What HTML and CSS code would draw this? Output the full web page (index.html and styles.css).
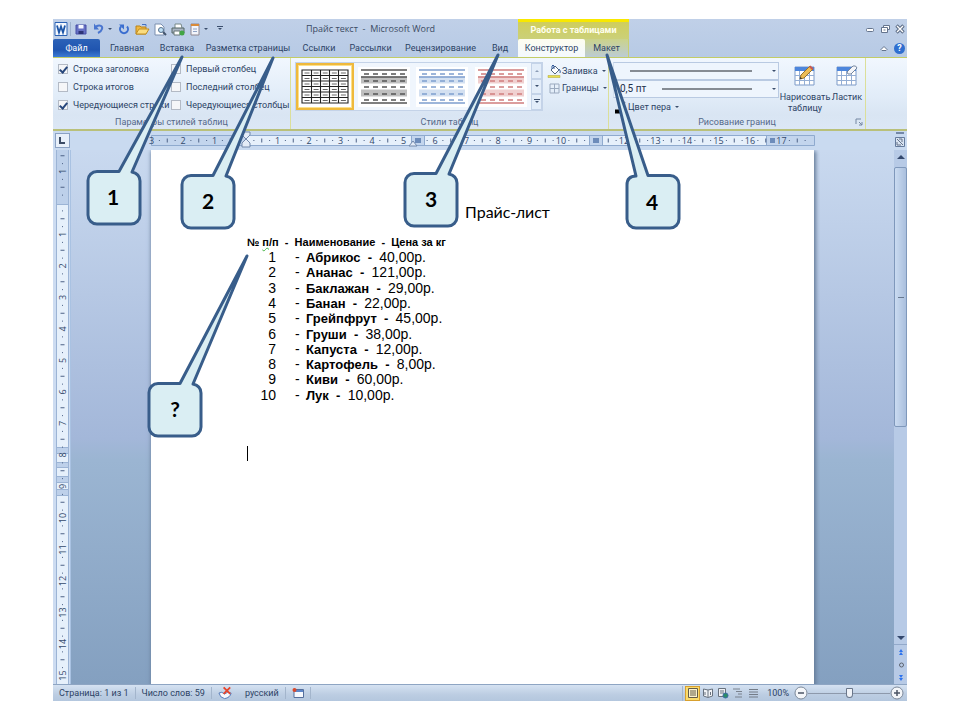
FILE: index.html
```html
<!DOCTYPE html>
<html lang="ru">
<head>
<meta charset="utf-8">
<title>Прайс текст - Microsoft Word</title>
<link rel="stylesheet" href="styles.css">
</head>
<body>
<main class="window">
  <header class="top">
    <div class="titlebar">
      <div class="quick">
        <svg class="ic w18" viewBox="0 0 18 16"><path d="M2 1.500h12v13h-12z" fill="#f4f8fe" stroke="#2b62b5"/><path d="M4 4.500l2 7 2-6 2 6 2-7" fill="none" stroke="#1c55a8" stroke-width="1.800"/><path d="M17.500 1v14" stroke="#9db1cd"/></svg>
        <button class="ic w20" aria-label="Сохранить"><svg viewBox="0 0 20 16"><path d="M5 4h10v9H5z" fill="#6670c4" stroke="#464fa6"/><path d="M7.500 4h5v3.500h-5z" fill="#f5f7ff"/><path d="M7.500 10h5v3h-5z" fill="#2d3478"/></svg></button>
        <button class="ic w16" aria-label="Отменить"><svg viewBox="0 0 16 16"><path d="M5 5.500c4-2 7-.5 6 2.500-.5 2-2 3-4 4" fill="none" stroke="#4a76cf" stroke-width="2"/><path d="M3 2.500v6h5z" fill="#4a76cf"/></svg></button>
        <span class="caret"></span>
        <button class="ic w18" aria-label="Повторить"><svg viewBox="0 0 18 16"><path d="M6 5.500a4 4 0 1 0 6 0" fill="none" stroke="#3a6ed0" stroke-width="2"/><path d="M4 3.500h5v5z" fill="#3a6ed0"/></svg></button>
        <button class="ic w18" aria-label="Открыть"><svg viewBox="0 0 18 16"><path d="M3 13V5h4l1 1h5v7z" fill="#f0b840" stroke="#b98218"/><path d="M3 13l3-5h10l-3 5z" fill="#fbdc7e" stroke="#c08e22"/><path d="M9 3.500h4v2" fill="none" stroke="#4472c4"/></svg></button>
        <button class="ic w18" aria-label="Просмотр"><svg viewBox="0 0 18 16"><path d="M4 3h6l3 3v8H4z" fill="#fff" stroke="#7b8fae"/><circle cx="10" cy="9" r="2.500" fill="#bfe0f5" stroke="#55718f"/><path d="M12 11l3 3" stroke="#44566e" stroke-width="2"/></svg></button>
        <button class="ic w18" aria-label="Печать"><svg viewBox="0 0 18 16"><path d="M6 7V3h6l1 4" fill="#fff" stroke="#788"/><path d="M3 7h12v5H3z" fill="#a9b4c2" stroke="#566"/><path d="M5 10h6v4H5z" fill="#fff" stroke="#677"/><circle cx="13" cy="12" r="2.500" fill="#42a544"/></svg></button>
        <button class="ic w16" aria-label="Вставить"><svg viewBox="0 0 16 16"><path d="M4 3h8v11H4z" fill="#f3f5fb" stroke="#8f8790"/><path d="M4 3h8v2H4z" fill="#d98a38"/><path d="M6 8h4M6 10.500h4" stroke="#8fa3c5"/></svg></button>
        <span class="caret"></span><span class="bar"></span><span class="caret lined"></span>
      </div>
      <h1>Прайс текст&nbsp; -&nbsp; Microsoft Word</h1>
    </div>
    <div class="context-title">Работа с таблицами</div>
    <div class="controls">
      <button aria-label="Свернуть"><svg viewBox="0 0 10 10"><rect x="1.500" y="4.500" width="7" height="3" rx="1" fill="#fff" stroke="#64748d"/></svg></button>
      <button aria-label="Восстановить"><svg viewBox="0 0 10 10"><path d="M3.500 3.500v-2h6v4h-2" fill="#fff" stroke="#64748d"/><path d="M1.500 3.500h6v5h-6zM3.500 6h2" fill="#fff" stroke="#64748d"/></svg></button>
      <button aria-label="Закрыть"><svg viewBox="0 0 10 10"><path d="M1.500 1.500l7 7M8.500 1.500l-7 7" stroke="#5c6c86" stroke-width="3.400"/><path d="M2 2l6 6M8 2l-6 6" stroke="#fff" stroke-width="1.400"/></svg></button>
    </div>
    <nav class="tabs">
      <button class="file">Файл</button><button>Главная</button><button>Вставка</button><button>Разметка страницы</button><button>Ссылки</button><button>Рассылки</button><button>Рецензирование</button><button>Вид</button>
    </nav>
    <nav class="context-tabs"><button class="active">Конструктор</button><button>Макет</button></nav>
    <div class="controls help">
      <button aria-label="Свернуть ленту"><svg viewBox="0 0 10 10"><path d="M2 6.500l3-3 3 3-1 1H3z" fill="#fff" stroke="#64748d"/></svg></button>
      <button class="q" aria-label="Справка">?</button>
    </div>
  </header>

  <section class="ribbon">
    <fieldset class="group g-options">
      <div class="checks">
        <label><input type="checkbox" checked>Строка заголовка</label>
        <label><input type="checkbox">Первый столбец</label>
        <label><input type="checkbox">Строка итогов</label>
        <label><input type="checkbox">Последний столбец</label>
        <label><input type="checkbox" checked>Чередующиеся строки</label>
        <label><input type="checkbox">Чередующиеся столбцы</label>
      </div>
      <div class="caption">Параметры стилей таблиц</div>
    </fieldset>
    <div class="group g-styles">
      <div class="content">
        <div class="gallery">
          <button class="thumb selected" aria-label="Сетка таблицы"><svg viewBox="0 0 52 40"><path d="M3 3h46v33H3zM3 8.500h46M3 14h46M3 19.500h46M3 25h46M3 30.500h46M12.500 3v33M21.500 3v33M30.500 3v33M39.500 3v33" fill="none" stroke="#222" stroke-width="1.100"/><path d="M5.500 6h42M5.500 11.500h42M5.500 17h42M5.500 22.500h42M5.500 28h42M5.500 33.500h42" stroke="#666" stroke-dasharray="5 4.100"/></svg></button>
          <button class="thumb gray" aria-label="Светлая заливка"><svg viewBox="0 0 52 40"><use href="#style"/></svg></button>
          <button class="thumb blue" aria-label="Светлая заливка, акцент 1"><svg viewBox="0 0 52 40"><use href="#style"/></svg></button>
          <button class="thumb red" aria-label="Светлая заливка, акцент 2"><svg viewBox="0 0 52 40"><use href="#style"/></svg></button>
          <div class="scroller"><button aria-label="Вверх"><i class="caret up"></i></button><button aria-label="Вниз"><i class="caret"></i></button><button aria-label="Ещё"><i class="caret lined"></i></button></div>
        </div>
        <div class="fills">
          <button><svg viewBox="0 0 14 14"><path d="M4 6l4-4 4 4-4 4z" fill="#fff" stroke="#51647f"/><path d="M5 5V2q1-2 2 0v3M12 5q2 2 1 4" fill="none" stroke="#335b9b"/><path d="M1 11.500h12v2H1z" fill="#e9df4c" stroke="#aca435" stroke-width=".5"/></svg>Заливка<i class="caret"></i></button>
          <button><svg viewBox="0 0 14 14"><path d="M3 3h9v9H3zM3 7.500h9M7.500 3v9" fill="none" stroke="#9baabf"/></svg>Границы<i class="caret"></i></button>
        </div>
      </div>
      <div class="caption">Стили таблиц</div>
    </div>
    <div class="group g-draw">
      <div class="content">
        <div class="pens">
          <div class="combo"><select aria-label="Стиль пера"><option></option></select><span class="line"></span><i class="caret"></i></div>
          <div class="combo"><select aria-label="Толщина пера"><option>0,5 пт</option></select><span class="line"></span><i class="caret"></i></div>
          <button class="pen"><svg viewBox="0 0 14 14"><path d="M6 8l6-6" stroke="#7b8aa5" stroke-width="2"/><path d="M2 9.500h5v4H2z" fill="#000"/></svg>Цвет пера<i class="caret"></i></button>
        </div>
        <button class="big"><svg viewBox="0 0 24 22"><use href="#table"/><path d="M7 14l1-4 9-9 3 3-9 9z" fill="#edbd55" stroke="#96722d"/><path d="M16 2l1.500-1.500 3 3L19 5z" fill="#c95a50"/><path d="M7 14l.5-2 1.500 1.500z" fill="#222"/></svg>Нарисовать таблицу</button>
        <button class="big"><svg viewBox="0 0 24 22"><use href="#table"/><path d="M12 7l6-6q3-1 4 2l-6 6q-4 1-4-2z" fill="#f4f6fa" stroke="#74869f"/></svg>Ластик</button>
      </div>
      <div class="caption">Рисование границ<svg class="launch" viewBox="0 0 8 8"><path d="M1 6V1h5M4 4l3 3M7 4v3H4" fill="none" stroke="#7587a2"/></svg></div>
    </div>
  </section>

  <section class="ruler-row">
    <button class="corner" aria-label="Табуляция"><svg viewBox="0 0 13 13"><path d="M4 3v6h5" fill="none" stroke="#3c4c66" stroke-width="2"/></svg></button>
    <div class="ruler-area">
      <svg class="h-ruler" id="hruler" viewBox="0 0 664 18">
        <rect x="0" y="4" width="664" height="11" fill="#c3d5ed"/>
        <path d="M95 4h165v11H95zM273 4h165v11H273zM451 4h164v11H451z" fill="#e6f0fb"/>
        <path d="M.5 4.500h663v10H.5z" fill="none" stroke="#8faace"/>
        <path d="M260.500 4v11M273.500 4v11M438.500 4v11M451.500 4v11M615.500 4v11" stroke="#8faace"/>
        <path d="M264 7h6v5h-6zM442 7h6v5h-6zM619 7h5v5h-5z" fill="#6d8cba"/>
      </svg>
    </div>
    <button class="view-ruler" aria-label="Линейка"><svg viewBox="0 0 12 18"><path d="M2 1h8" stroke="#566b8f" stroke-width="1.500"/><path d="M1.500 5.500h9v9h-9z" fill="#d9e4f2" stroke="#657b9c"/><path d="M3 7l6 6M5 7h3v3M3 10v3h4" fill="none" stroke="#65738a"/></svg></button>
  </section>

  <section class="workspace">
    <div class="v-side">
      <svg class="v-ruler" id="vruler" viewBox="0 0 18 534">
        <rect x="4" width="11" height="534" fill="#e6f0fb"/>
        <path d="M4 0h11v54H4zM4 297h11v6H4zM4 312h11v5H4zM4 326h11v6H4zM4 339h11v6H4z" fill="#bdd0ea"/>
        <path d="M3.500 0v534M15.500 0v534M4 54.500h11M4 297.500h11M4 303.500h11M4 312.500h11M4 317.500h11M4 326.500h11M4 332.500h11M4 339.500h11M4 345.500h11" stroke="#9cb4d5"/>
      </svg>
    </div>
    <div class="canvas">
      <article class="page">
        <h2>Прайс-лист</h2>
        <div class="price">
          <p class="heads">№ <u>п</u>/п&nbsp; -&nbsp; Наименование&nbsp; -&nbsp; Цена за кг</p>
          <div class="rows">
            <p><span>1</span><span>-</span><b>Абрикос &nbsp;-&nbsp; </b>40,00р.</p>
            <p><span>2</span><span>-</span><b>Ананас &nbsp;-&nbsp; </b>121,00р.</p>
            <p><span>3</span><span>-</span><b>Баклажан&nbsp; -&nbsp; </b>29,00р.</p>
            <p><span>4</span><span>-</span><b>Банан&nbsp; -&nbsp; </b>22,00р.</p>
            <p><span>5</span><span>-</span><b>Грейпфрут &nbsp;-&nbsp; </b>45,00р.</p>
            <p><span>6</span><span>-</span><b>Груши&nbsp; -&nbsp; </b>38,00р.</p>
            <p><span>7</span><span>-</span><b>Капуста &nbsp;-&nbsp; </b>12,00р.</p>
            <p><span>8</span><span>-</span><b>Картофель &nbsp;-&nbsp; </b>8,00р.</p>
            <p><span>9</span><span>-</span><b>Киви&nbsp; -&nbsp; </b>60,00р.</p>
            <p><span>10</span><span>-</span><b>Лук&nbsp; -&nbsp; </b>10,00р.</p>
          </div>
          <div class="cursor"></div>
        </div>
      </article>
    </div>
    <div class="scrollbar">
      <button aria-label="Прокрутить вверх"><i class="caret up big-caret"></i></button>
      <div class="track"><div class="handle"></div></div>
      <button class="down" aria-label="Прокрутить вниз"><i class="caret big-caret"></i></button>
      <button aria-label="Предыдущая страница"><svg viewBox="0 0 8 8"><path d="M2 4l2-3 2 3zM2 7l2-3 2 3z" fill="#2d73ee"/></svg></button>
      <button aria-label="Выбор объекта"><svg viewBox="0 0 8 8"><circle cx="4.500" cy="4" r="2" fill="none" stroke="#5d6470"/></svg></button>
      <button aria-label="Следующая страница"><svg viewBox="0 0 8 8"><path d="M2 1l2 3 2-3zM2 4l2 3 2-3z" fill="#2d73ee"/></svg></button>
    </div>
  </section>

  <footer class="status">
    <span>Страница: 1 из 1</span>
    <span>Число слов: 59</span>
    <span class="proof"><svg class="s16" viewBox="0 0 16 14"><path d="M1 7q3-2 6 1 3-3 7-1-1 5-7 6-5-1-6-6z" fill="#f6f8fc" stroke="#4e74b5"/><path d="M6 1l7 7M13 1L6 8" stroke="#e8452c" stroke-width="2"/></svg></span>
    <span>русский</span>
    <span><svg class="s12" viewBox="0 0 12 12"><path d="M2 2.500h9.500v8H2z" fill="#f6f9fe" stroke="#556f9c"/><path d="M3 4h8" stroke="#5d86c8" stroke-width="2"/><circle cx="2.500" cy="3" r="2" fill="#d9482b"/></svg></span>
    <div class="views">
      <button class="on" aria-label="Разметка страницы"><svg viewBox="0 0 12 12"><path d="M1.500 1.500h9v9h-9zM3 4h6M3 6h6M3 8h6" fill="#fbf3cf" stroke="#645c48"/></svg></button>
      <button aria-label="Режим чтения"><svg viewBox="0 0 12 12"><path d="M1.500 2l4.500 1 4.500-1v7L6 10.500 1.500 9zM6 3v7M3 5v3M8.500 5v3" fill="#f1f3f6" stroke="#68727f"/></svg></button>
      <button aria-label="Веб-документ"><svg viewBox="0 0 12 12"><path d="M1.500 1.500h7v8h-7zM3 4h4M3 6h4" fill="#eef0f4" stroke="#68727f"/><circle cx="8.500" cy="8.500" r="2.500" fill="#2c8d68" stroke="#3d69a5"/></svg></button>
      <button aria-label="Структура"><svg viewBox="0 0 12 12"><path d="M1 2h7M4 4.500h6M6 7h4M3 10h7" stroke="#7a828e"/></svg></button>
      <button aria-label="Черновик"><svg viewBox="0 0 12 12"><path d="M2 2.500h9M2 5h9M2 7.500h9M2 10h9" stroke="#747c88"/></svg></button>
    </div>
    <label class="percent" for="zoom">100%</label>
    <button class="round" aria-label="Уменьшить"><svg viewBox="0 0 14 14"><circle cx="7" cy="7" r="6" fill="#f4f6f9" stroke="#7d899a"/><path d="M4 7h6" stroke="#4c5565" stroke-width="1.500"/></svg></button>
    <input type="range" id="zoom" min="0" max="100" value="50">
    <button class="round" aria-label="Увеличить"><svg viewBox="0 0 14 14"><circle cx="7" cy="7" r="6" fill="#f4f6f9" stroke="#7d899a"/><path d="M4 7h6M7 4v6" stroke="#4c5565" stroke-width="1.500"/></svg></button>
  </footer>

  <svg class="callouts" viewBox="53 19 854 681">
    <path d="M119 171.500H97a9 9 0 0 0-9 9V215a9 9 0 0 0 9 9h34a9 9 0 0 0 9-9v-34q0-7-8-9L182 57z"/>
    <path d="M213 175.500H191a9 9 0 0 0-9 9V219a9 9 0 0 0 9 9h34a9 9 0 0 0 9-9v-34q0-7-8-9L273 58z"/>
    <path d="M436 173.500H414a9 9 0 0 0-9 9V217a9 9 0 0 0 9 9h34a9 9 0 0 0 9-9v-34q0-7-8-9L498 55z"/>
    <path d="M648 175.500H670a9 9 0 0 1 9 9V219a9 9 0 0 1-9 9h-34a9 9 0 0 1-9-9v-34q0-9 9-9L607 55z"/>
    <path d="M180 383.500H158a9 9 0 0 0-9 9V427a9 9 0 0 0 9 9h34a9 9 0 0 0 9-9v-34q0-7-8-9L247 256z"/>
    <text x="113" y="205">1</text><text x="208" y="209">2</text><text x="431" y="207">3</text><text x="652" y="210">4</text><text x="175" y="417">?</text>
  </svg>
</main>

<svg class="defs" aria-hidden="true">
  <symbol id="style" viewBox="0 0 52 40"><path class="band" d="M3 9.500h46v7H3zM3 22.500h46v7H3z"/><path class="rule" d="M3 3h46M3 10h46M3 36h46"/><path class="dash" d="M6 7h41M6 14h41M6 20h41M6 27h41M6 33h41"/></symbol>
  <symbol id="table" viewBox="0 0 24 22"><path d="M2 2h19v18H2z" fill="#fff" stroke="#7c9bc8"/><path d="M2 2h19v4H2z" fill="#4d86dc"/><path d="M2 10.500h19M2 15.500h19M6.500 6v14M11.500 6v14M16.500 6v14" stroke="#94aed4"/></symbol>
</svg>
<script src="ruler.js"></script>
</body>
</html>
```
FILE: styles.css
```css
* { box-sizing: border-box; }
body { margin: 0; padding: 19px 53px 20px; min-height: 100vh; display: flex; background: #fff; font: 9px/12px Roboto, "Open Sans", sans-serif; color: #2c4365; }
button { font: inherit; color: inherit; background: none; border: 0; padding: 0; margin: 0; }
button svg, .ic { display: block; }
h1, h2, p, fieldset { margin: 0; padding: 0; border: 0; font-weight: normal; }
.window { position: relative; flex: 1; display: flex; flex-direction: column; background: #c5d7ee; min-width: 0; }
.defs { position: absolute; width: 0; height: 0; }

.top { display: grid; grid-template-columns: 465px 111px 1fr; grid-template-rows: 20px 18px; background: linear-gradient(#c0d0e8, #b7cae5); border-bottom: 1px solid #c3cc66; }
.titlebar { display: flex; align-items: center; gap: 83px; }
.titlebar h1 { font: 9px/12px "Open Sans", sans-serif; white-space: nowrap; color: #3c4b63; }
.quick { display: flex; align-items: center; flex: none; width: 170px; }
.ic { height: 16px; flex: none; }
.w16 { width: 16px; } .w18 { width: 18px; } .w20 { width: 20px; }
.ic svg { width: 100%; height: 16px; }
.quick .caret { margin: 0 3px 0 1px; }
.quick .bar { width: 1px; height: 12px; background: #8fa3c0; margin: 0 4px 0 2px; }
.caret { display: inline-block; flex: none; border: 2px solid transparent; border-top-color: #3b4e6d; border-bottom: 0; width: 4px; height: 2px; }
.caret.up { border-top: 0; border-bottom: 2px solid #8b9cb5; }
.caret.lined { position: relative; }
.caret.lined::before { content: ""; position: absolute; left: -3px; top: -4px; width: 6px; height: 1px; background: #3b4e6d; }
.caret.big-caret { border-width: 4px; border-top-color: #34486d; border-bottom: 0; width: 8px; height: 4px; }
.caret.big-caret.up { border-top: 0; border-bottom: 4px solid #34486d; }
.context-title { display: flex; align-items: center; justify-content: center; background: linear-gradient(#f8e800 0 3px, #cfce5c 3px, #cbd079); color: #fffff0; font-weight: bold; white-space: nowrap; padding-top: 2px; }
.controls { display: flex; justify-content: flex-end; align-items: center; gap: 5px; padding-right: 2px; }
.controls svg { width: 10px; height: 10px; }
.help .q { width: 11px; height: 11px; border-radius: 50%; background: #2f6fd0; color: #fff; font-weight: bold; line-height: 11px; }
.tabs { display: grid; grid-template-columns: 47px 54px 46px 96px 46px 57px 83px 1fr; }
.tabs button, .context-tabs button { white-space: nowrap; text-align: center; line-height: 18px; }
.tabs .file { background: linear-gradient(#2c62b8, #2055b0 60%, #3d7bd4); color: #fff; border-radius: 2px 2px 0 0; }
.context-tabs { display: grid; grid-template-columns: 67px 1fr; background: linear-gradient(#cbd38a, #bccbd4); border-right: 1px solid #c8cf70; }
.context-tabs .active { background: linear-gradient(#fdfdf0, #f3f8fe); border-radius: 2px 2px 0 0; }

.ribbon { display: flex; height: 73px; background: linear-gradient(#f1f7fe, #e1ecf8 55%, #d9e5f3 80%, #dce7f5); border-bottom: 2px solid #b9c07a; }
.group { display: flex; flex-direction: column; justify-content: space-between; border-right: 1px solid #dbdf9a; min-width: 0; }
.g-options { width: 238px; } .g-styles { width: 318px; } .g-draw { width: 257px; }
.caption { position: relative; text-align: center; color: #55698a; line-height: 14px; }
.content { display: flex; padding: 4px 0 0 4px; }
.checks { display: grid; grid-template-columns: 113px 1fr; grid-auto-rows: 18px; padding: 2px 0 0 5px; }
.checks label { display: flex; align-items: center; gap: 5px; white-space: nowrap; min-width: 0; }
.checks input { appearance: none; margin: 0; flex: none; width: 10px; height: 10px; border: 1px solid #b3bac5; background: #f5f6f8; display: grid; place-items: center; }
.checks input:checked::before { content: ""; width: 3px; height: 6px; border: solid #27477c; border-width: 0 2px 2px 0; transform: rotate(40deg); }
.gallery { display: flex; gap: 1px; width: 248px; height: 49px; border: 1px solid #c4d3e8; background: #f0f6fd; }
.thumb { width: 58px; display: grid; place-items: center; }
.thumb svg { width: 52px; height: 40px; background: #fff; }
.thumb.selected { border: 2px solid #efb93c; background: #fff; box-shadow: inset 0 0 0 1px #fbe08b; }
.gray { color: #555; --band: #bfbfbf; } .blue { color: #7f9fce; --band: #d3e0f1; } .red { color: #cf7d7d; --band: #f0d0d0; }
.band { fill: var(--band); }
.rule { stroke: currentColor; stroke-width: 1.500; fill: none; }
.dash { stroke: currentColor; stroke-dasharray: 5 4; stroke-width: 1.300; fill: none; }
.scroller { display: grid; grid-template-rows: 1fr 1fr 1fr; width: 11px; margin-left: auto; background: #e3edf9; }
.scroller button { border: 1px solid #c4d3e8; display: grid; place-items: center; }
.fills { display: flex; flex-direction: column; padding: 0 0 0 4px; }
.fills button, .pen { display: flex; align-items: center; gap: 1px; height: 17px; white-space: nowrap; }
.fills svg, .pen svg { width: 14px; height: 14px; flex: none; }
.fills .caret, .pen .caret { margin-left: 3px; }
.pens { width: 168px; }
.combo { display: flex; align-items: center; height: 18px; border: 1px solid #b9cae2; border-left-color: #d4e0ef; background: #eef5fd; padding-right: 2px; margin-right: 2px; }
.combo select { appearance: none; border: 0; background: none; font: 10px/14px Roboto, "Open Sans", sans-serif; color: #1d2f4a; padding: 0 0 0 6px; width: 48px; }
.combo .line { flex: 1; height: 2px; background: #858b93; margin-right: 20px; }
.combo:first-child select { width: 16px; }
.big { display: flex; flex-direction: column; align-items: center; width: 48px; line-height: 11px; padding-top: 3px; gap: 5px; flex: none; }
.big + .big { width: 36px; }
.big svg { width: 24px; height: 22px; }
.launch { position: absolute; right: 2px; top: 3px; width: 8px; height: 8px; }

.ruler-row { display: flex; height: 19px; background: #c9daf0; }
.corner { width: 15px; height: 15px; margin: 2px 3px 0 2px; border: 1px solid #8ba2c4; background: #e8f0fa; flex: none; }
.ruler-area { flex: 1; display: flex; justify-content: center; min-width: 0; }
.h-ruler { width: 664px; height: 18px; flex: none; overflow: visible; }
.view-ruler { width: 14px; padding-left: 1px; }
.view-ruler svg { width: 12px; height: 18px; }
.num { font: 9px "Open Sans", sans-serif; fill: #34496b; text-anchor: middle; }
.tick { stroke: #4d6286; stroke-width: 1; }

.workspace { flex: 1; display: flex; min-height: 0; }
.v-side { width: 18px; background: #cddcf1; flex: none; border-right: 1px solid #a9c2e2; }
.v-ruler { width: 18px; height: 534px; display: block; }
.canvas { flex: 1; display: flex; padding: 0 80px; min-width: 0; background: linear-gradient(#c9d9ef, #a3b7d9 54%, #9bb5d2 58%, #84a0c0); }
.page { flex: 1; background: #fff; box-shadow: 1px 2px 4px 1px #657b98; clip-path: inset(0 -6px 0 -6px); min-width: 0; }
.page h2 { padding-top: 50px; text-align: center; font: 16px/24px Lato, "Open Sans", sans-serif; color: #000; margin-left: 50px; }
.price { padding: 11px 0 0 96px; color: #000; font: 14px/15px "Liberation Sans", sans-serif; }
.heads { font-size: 11px; font-weight: bold; line-height: 15px; white-space: nowrap; }
.heads u { text-decoration: underline wavy #45b545 1px; }
.rows { display: grid; grid-auto-rows: 1fr; height: 153px; }
.rows p { display: grid; grid-template-columns: 29px 30px auto 1fr; align-items: baseline; white-space: pre; }
.rows b { font-size: 13px; }
.rows span:first-child { text-align: right; }
.rows span + span { padding-left: 19px; }
.cursor { width: 1px; height: 15px; background: #000; margin-top: 43px; }
.scrollbar { width: 13px; background: #b7cae6; display: flex; flex-direction: column; flex: none; }
.scrollbar button { height: 13px; display: grid; place-items: center; }
.scrollbar svg { width: 8px; height: 8px; }
.scrollbar .down { border-bottom: 1px solid #92a9ca; }
.track { flex: 1; padding-top: 4px; }
.handle { height: 56%; border: 1px solid #7f98bb; border-radius: 2px; background: linear-gradient(#67788f, #67788f) center / 6px 1px no-repeat, linear-gradient(90deg, #cadbf1, #aabfdd); }

.status { display: flex; align-items: center; height: 17px; border-top: 1px solid #8ea5c3; background: linear-gradient(#d5e2f2, #bccde2 60%, #b4c7de); white-space: nowrap; flex: none; }
.status > span { padding: 0 6px; border-right: 1px solid #a3b5cc; line-height: 12px; }
.status > .proof { border: 0; }
.status > span svg { display: block; }
.s16 { width: 15px; height: 14px; } .s12 { width: 12px; height: 12px; }
.views { display: flex; margin-left: auto; border-left: 1px solid #a3b5cc; padding-left: 2px; }
.views button { width: 15px; height: 15px; display: grid; place-items: center; }
.views svg { width: 12px; height: 12px; }
.views .on { border: 1px solid #d8a02e; background: #fbdc6c; }
.percent { padding: 0 5px 0 7px; }
.round svg { width: 14px; height: 14px; }
#zoom { appearance: none; width: 82px; height: 14px; margin: 0; background: linear-gradient(#8d99ab, #8d99ab) center / 100% 1px no-repeat; }
#zoom::-webkit-slider-thumb { appearance: none; width: 7px; height: 10px; border: 1px solid #69768a; border-radius: 1px 1px 4px 4px; background: #f0f3f8; }
.status .round:last-child { margin-right: 3px; }

.callouts { position: absolute; left: 0; top: 0; width: 854px; height: 681px; pointer-events: none; overflow: visible; }
.callouts path { fill: #daeef3; stroke: #385d8a; stroke-width: 3; stroke-linejoin: round; }
.callouts text { font: bold 21px Lato, "Open Sans", sans-serif; fill: #000; text-anchor: middle; }
```
FILE: ruler.js
```js
const NS = 'http://www.w3.org/2000/svg';
const UNIT = 31.5;

function add(svg, name, attrs, text) {
  const node = document.createElementNS(NS, name);
  for (const key in attrs) node.setAttribute(key, attrs[key]);
  if (text) node.textContent = text;
  svg.appendChild(node);
}

// columns: spans [from, to] taken by table column markers, left free of numbers and ticks
function drawRuler(svg, zero, length, vertical, columns) {
  for (let q = -12; q < 72; q++) {
    const pos = zero + q * UNIT / 4;
    if (pos < 0 || pos > length - 5) continue;
    if (columns.some(([from, to]) => pos > from && pos < to)) continue;
    if (q % 4 === 0) {
      if (q === 0) continue;
      const attrs = vertical
        ? { class: 'num', transform: `translate(13 ${pos}) rotate(-90)` }
        : { class: 'num', x: pos, y: 13 };
      add(svg, 'text', attrs, String(Math.abs(q / 4)));
    } else {
      const half = q % 2 === 0 ? 2 : 0.5;
      const attrs = vertical
        ? { class: 'tick', x1: 9.5 - half, x2: 9.5 + half, y1: pos, y2: pos }
        : { class: 'tick', x1: pos, x2: pos, y1: 9.5 - half, y2: 9.5 + half };
      add(svg, 'line', attrs);
    }
  }
}

const horizontal = document.getElementById('hruler');
drawRuler(horizontal, 95, 664, false, [[258, 275], [436, 453], [615, 626]]);
add(horizontal, 'path', { d: 'M91 1h8v3l-4 4-4-4zM91 16v-4l4-4 4 4v4zM258 15l4-5 4 5z', fill: '#e4ecf7', stroke: '#7388aa' });
drawRuler(document.getElementById('vruler'), 53, 534, true, []);
```
